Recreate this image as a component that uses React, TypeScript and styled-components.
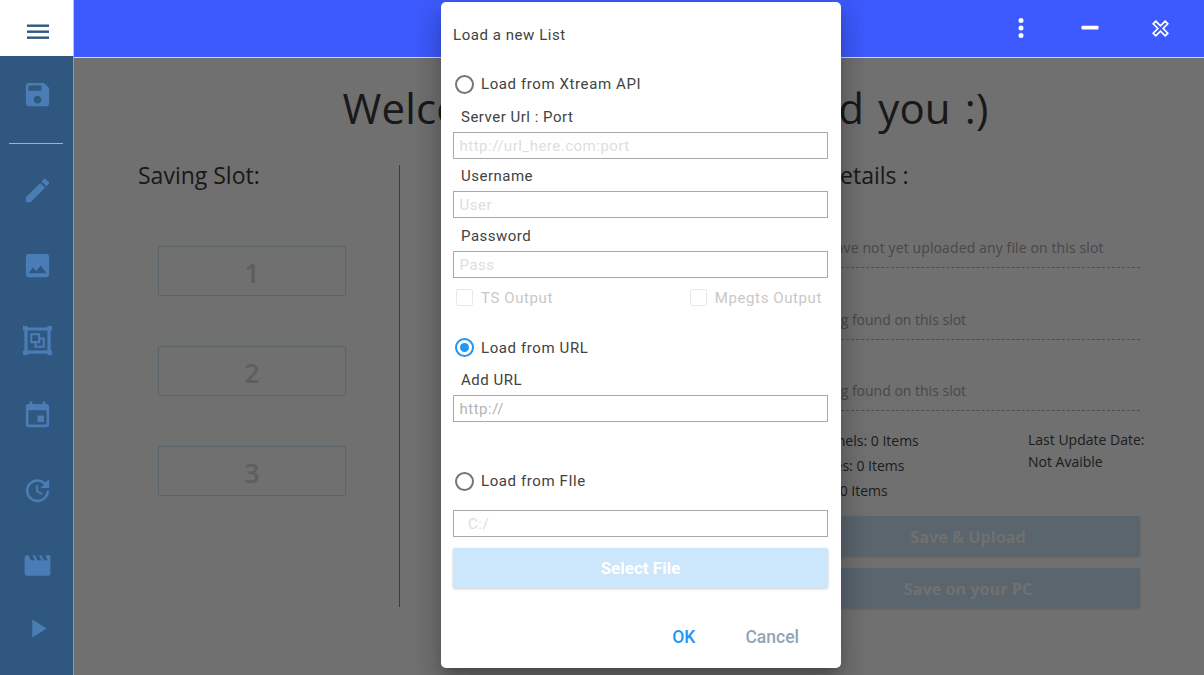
import React from 'react';
import styled, { createGlobalStyle } from 'styled-components';

const GlobalStyle = createGlobalStyle`
  html, body, #root {
    margin: 0;
    height: 100%;
  }

  body {
    overflow: hidden;
    font-family: "Open Sans", "Noto Sans", sans-serif;
    background: #fff;
  }

  * {
    box-sizing: border-box;
  }
`;

const Page = styled.div`
  position: relative;
  display: flex;
  width: 1204px;
  height: 675px;
  overflow: hidden;
`;

const LeftRail = styled.div`
  display: flex;
  flex-direction: column;
  width: 74px;
`;

const MenuCell = styled.div`
  height: 56px;
  display: flex;
  align-items: center;
  justify-content: center;
  padding: 7px 0 0 2px;
  background: #fff;
  border-right: 1px solid #c4c4c4;
  color: #2f5780;
`;

const Sidebar = styled.nav`
  flex: 1;
  padding-top: 1px;
  background: #2f5780;
  border-right: 1px solid #8f9aa5;
`;

const NavItem = styled.div<{ $short?: boolean }>`
  height: ${(p) => (p.$short ? '50px' : '75px')};
  display: flex;
  align-items: center;
  justify-content: center;
  padding-left: 2px;
  color: #4a7db5;
`;

const NavDivider = styled.hr`
  width: 54px;
  height: 1px;
  margin: 11px 0 9px 9px;
  border: 0;
  background: #9fb2c6;
`;

const Content = styled.div`
  flex: 1;
  display: flex;
  flex-direction: column;
`;

const TopBar = styled.header`
  display: flex;
  justify-content: flex-end;
  align-items: center;
  height: 58px;
  padding: 0 9px 1px 0;
  background: #3d5afe;
  border-bottom: 1px solid #ddd;
`;

const TopAction = styled.button`
  width: 70px;
  height: 57px;
  display: flex;
  align-items: center;
  justify-content: center;
  padding: 0;
  border: 0;
  background: none;
  color: #fff;
`;

const Main = styled.main`
  position: relative;
  flex: 1;
  padding-top: 20px;
  background: #fff;
`;

const Welcome = styled.h1`
  margin: 0 0 27px;
  padding-left: 53px;
  font-size: 42px;
  font-weight: 400;
  line-height: 60px;
  letter-spacing: 0.15px;
  word-spacing: 3px;
  text-align: center;
  color: #3a3a3a;
  white-space: nowrap;
`;

const Columns = styled.div`
  display: flex;
  height: 442px;
`;

const SlotColumn = styled.section`
  width: 326px;
  height: 442px;
  padding-left: 64px;
  border-right: 1px solid #888;
`;

const SectionTitle = styled.h2`
  margin: 0;
  font-size: 23px;
  font-weight: 400;
  line-height: 20px;
  color: #3a3a3a;
`;

const SlotList = styled.div`
  display: flex;
  flex-direction: column;
  gap: 50px;
  margin: 61px 0 0 20px;
`;

const SlotButton = styled.div`
  width: 188px;
  height: 50px;
  display: flex;
  align-items: center;
  justify-content: center;
  padding-top: 2px;
  border: 1px solid #cfe2f3;
  border-radius: 2px;
  box-shadow: 0 0 2px rgba(33, 150, 243, 0.2);
  font-size: 27px;
  font-weight: 600;
  color: #dcd2d5;
`;

const DetailsColumn = styled.section`
  width: 344px;
  margin-left: 396px;
`;

const DetailsTitle = styled(SectionTitle)`
  margin-left: -19px;
`;

const SlotRow = styled.div<{ $first?: boolean }>`
  height: 30px;
  margin-top: ${(p) => (p.$first ? '53px' : '41.5px')};
  padding-left: ${(p) => (p.$first ? '2px' : '0')};
  border-bottom: 1px dashed #b0b0b0;
  font-size: 14px;
  line-height: 20px;
  letter-spacing: ${(p) => (p.$first ? '0.12px' : '0')};
  color: #a4a4a4;
  white-space: nowrap;
`;

const Stats = styled.div`
  display: flex;
  justify-content: space-between;
  height: 88px;
  margin-top: 17px;
  font-size: 14px;
  color: #444;
`;

const StatLines = styled.div`
  margin-left: 7px;
  line-height: 25px;
`;

const UpdateLines = styled.div`
  width: 112px;
  padding-top: 1px;
  line-height: 22px;
  white-space: nowrap;
`;

const SaveButton = styled.div`
  height: 40px;
  display: flex;
  align-items: center;
  justify-content: center;
  padding-top: 1px;
  margin-bottom: 12px;
  border-radius: 2px;
  background: #cce6fb;
  box-shadow: 0 1px 3px rgba(0, 0, 0, 0.15);
  font-size: 16.2px;
  font-weight: 700;
  color: #fff;
`;

const Scrim = styled.div`
  position: absolute;
  inset: 0;
  background: rgba(0, 0, 0, 0.56);
`;

const Dialog = styled.div`
  position: absolute;
  top: 2px;
  left: 441px;
  width: 400px;
  height: 666px;
  padding: 0 13px 0 12px;
  border-radius: 5px;
  background: #fff;
  box-shadow: 0 8px 10px -5px rgba(0, 0, 0, 0.2), 0 16px 24px 2px rgba(0, 0, 0, 0.14), 0 6px 30px 5px rgba(0, 0, 0, 0.12);
  font-family: Roboto, sans-serif;
  color: #424242;
`;

const DialogTitle = styled.div`
  height: 72px;
  padding-top: 23px;
  font-size: 15px;
  line-height: 20px;
  letter-spacing: 0.55px;
`;

const RadioRow = styled.label<{ $top?: number }>`
  display: flex;
  align-items: center;
  gap: 7px;
  height: 20px;
  margin: ${(p) => p.$top ?? 0}px 0 0 2px;
  font-size: 15px;
  letter-spacing: 0.6px;
`;

const RadioMark = styled.span<{ $on?: boolean }>`
  position: relative;
  width: 19px;
  height: 19px;
  border: 2px solid ${(p) => (p.$on ? '#2196f3' : '#757575')};
  border-radius: 50%;

  &::after {
    content: '';
    display: ${(p) => (p.$on ? 'block' : 'none')};
    position: absolute;
    inset: 3px;
    border-radius: 50%;
    background: #2196f3;
  }
`;

const FieldLabel = styled.div<{ $lead?: boolean }>`
  height: 20px;
  margin: ${(p) => (p.$lead ? '12.5px' : '7.5px')} 0 5px 8px;
  font-size: 15px;
  line-height: 20px;
  letter-spacing: 0.5px;
`;

const TextField = styled.input<{ $dim?: boolean; $indent?: boolean; $top?: number }>`
  display: block;
  width: 375px;
  height: 27px;
  margin-top: ${(p) => p.$top ?? 0}px;
  padding: 1px ${(p) => (p.$indent ? '14px' : '5.5px')} 0;
  border: 1px solid #a9a9a9;
  border-radius: 0;
  outline: none;
  background: #fff;
  font-family: Roboto, sans-serif;
  font-size: 15px;
  letter-spacing: 0.5px;

  &::placeholder {
    color: ${(p) => (p.$dim ? '#dedede' : '#b4b4b4')};
    opacity: 1;
  }
`;

const OutputRow = styled.div`
  display: flex;
  justify-content: space-between;
  align-items: center;
  height: 20px;
  margin: 10px 6px 0 3px;
`;

const OutputOption = styled.span`
  display: flex;
  align-items: center;
  gap: 8px;
  font-size: 15px;
  letter-spacing: 0.6px;
  color: #c8c8c8;
`;

const CheckMark = styled.span`
  width: 17px;
  height: 17px;
  border: 1px solid #e8e8e8;
  border-radius: 2px;
`;

const SelectButton = styled.div`
  height: 40px;
  display: flex;
  align-items: center;
  justify-content: center;
  margin-top: 11px;
  border-radius: 2px;
  background: #cce6fb;
  box-shadow: 0 1px 3px rgba(0, 0, 0, 0.2);
  font-size: 17px;
  font-weight: 700;
  color: #fff;
`;

const DialogActions = styled.div`
  display: flex;
  justify-content: flex-end;
  align-items: center;
  gap: 50px;
  height: 30px;
  margin-top: 34px;
  padding-right: 29px;
`;

const ActionText = styled.span<{ $muted?: boolean }>`
  font-size: 17.5px;
  font-weight: 500;
  color: ${(p) => (p.$muted ? '#8fa5b5' : '#2196f3')};
`;

const MdIcon: React.FC<{ d: string; size?: number }> = ({ d, size = 31 }) => (
  <svg width={size} height={size} viewBox="0 0 24 24" fill="currentColor">
    <path d={d} />
  </svg>
);

const icons = {
  save: 'M17 3H5c-1.11 0-2 .9-2 2v14c0 1.1.89 2 2 2h14c1.1 0 2-.9 2-2V7l-4-4zm-5 16c-1.66 0-3-1.34-3-3s1.34-3 3-3 3 1.34 3 3-1.34 3-3 3zm3-10H5V5h10v4z',
  edit: 'M3 17.25V21h3.75L17.81 9.94l-3.75-3.75L3 17.25zM20.71 7.04c.39-.39.39-1.02 0-1.41l-2.34-2.34c-.39-.39-1.02-.39-1.41 0l-1.83 1.83 3.75 3.75 1.83-1.83z',
  image: 'M21 19V5c0-1.1-.9-2-2-2H5c-1.1 0-2 .9-2 2v14c0 1.1.9 2 2 2h14c1.1 0 2-.9 2-2zM8.5 13.5l2.5 3.01L14.5 12l4.5 6H5l3.5-4.5z',
  group: 'M2 2h3.2v1h13.6V2H22v3.2h-1v13.6h1V22h-3.2v-1H5.2v1H2v-3.2h1V5.2H2V2zm3.2 3.2v13.6h13.6V5.2H5.2zM7 7h6.8v3h3.2v7h-7v-3.2H7V7zm1.4 1.4v4h4v-4h-4zm5.4 3v2.4h-2.4v1.8h4.2v-4.2h-1.8z',
  event: 'M17 12h-5v5h5v-5zM16 1v2H8V1H6v2H5c-1.11 0-1.99.9-1.99 2L3 19c0 1.1.89 2 2 2h14c1.1 0 2-.9 2-2V5c0-1.1-.9-2-2-2h-1V1h-2zm3 18H5V8h14v11z',
  update: 'M21 10.12h-6.78l2.74-2.82c-2.73-2.7-7.15-2.8-9.88-.1-2.73 2.71-2.73 7.08 0 9.79s7.15 2.71 9.88 0C18.32 15.65 19 14.08 19 12.1h2c0 1.98-.88 4.55-2.64 6.29-3.51 3.48-9.21 3.48-12.72 0-3.5-3.47-3.53-9.11-.02-12.58s9.14-3.47 12.65 0L21 3v7.12zM12.5 8v4.25l3.5 2.08-.72 1.21L11 13V8h1.5z',
  movie: 'M18 4l2 4h-3l-2-4h-2l2 4h-3l-2-4H8l2 4H7L5 4H4c-1.1 0-1.99.9-1.99 2L2 18c0 1.1.9 2 2 2h16c1.1 0 2-.9 2-2V4h-4z',
  play: 'M8 5v14l11-7z',
};

const App: React.FC = () => (
  <Page>
    <GlobalStyle />
    <LeftRail>
      <MenuCell>
        <svg width="24" height="16" viewBox="0 0 24 16" fill="currentColor">
          <rect x="1" y="0.5" width="22" height="2.4" />
          <rect x="1" y="6.5" width="22" height="2.4" />
          <rect x="1" y="12.5" width="22" height="2.4" />
        </svg>
      </MenuCell>
      <Sidebar>
        <NavItem><MdIcon d={icons.save} /></NavItem>
        <NavDivider />
        <NavItem><MdIcon d={icons.edit} /></NavItem>
        <NavItem><MdIcon d={icons.image} /></NavItem>
        <NavItem><MdIcon d={icons.group} size={35} /></NavItem>
        <NavItem><MdIcon d={icons.event} /></NavItem>
        <NavItem><MdIcon d={icons.update} /></NavItem>
        <NavItem><MdIcon d={icons.movie} /></NavItem>
        <NavItem $short><MdIcon d={icons.play} /></NavItem>
      </Sidebar>
    </LeftRail>

    <Content>
      <TopBar>
        <TopAction>
          <svg width="10" height="22" viewBox="0 0 10 22" fill="currentColor">
            <circle cx="6" cy="3.5" r="2.5" />
            <circle cx="6" cy="11" r="2.5" />
            <circle cx="6" cy="18.5" r="2.5" />
          </svg>
        </TopAction>
        <TopAction>
          <svg width="18" height="6" viewBox="0 0 18 6" fill="currentColor">
            <rect x="0.5" y="0.8" width="17" height="3.6" rx="0.8" />
          </svg>
        </TopAction>
        <TopAction>
          <svg width="17" height="17" viewBox="0 0 18 18" fill="none" stroke="currentColor" strokeWidth="1.8">
            <path d="M4 1.2L9 6.2L14 1.2L16.8 4L11.8 9L16.8 14L14 16.8L9 11.8L4 16.8L1.2 14L6.2 9L1.2 4Z" />
          </svg>
        </TopAction>
      </TopBar>

      <Main>
        <Welcome>Welcome, I'm glad I found you :)</Welcome>
        <Columns>
          <SlotColumn>
            <SectionTitle>Saving Slot:</SectionTitle>
            <SlotList>
              <SlotButton>1</SlotButton>
              <SlotButton>2</SlotButton>
              <SlotButton>3</SlotButton>
            </SlotList>
          </SlotColumn>
          <DetailsColumn>
            <DetailsTitle>Slot Details :</DetailsTitle>
            <SlotRow $first>You have not yet uploaded any file on this slot</SlotRow>
            <SlotRow>Nothing found on this slot</SlotRow>
            <SlotRow>Nothing found on this slot</SlotRow>
            <Stats>
              <StatLines>
                <div>Channels: 0 Items</div>
                <div>Movies: 0 Items</div>
                <div>VOD: 0 Items</div>
              </StatLines>
              <UpdateLines>
                <div>Last Update Date:</div>
                <div>Not Avaible</div>
              </UpdateLines>
            </Stats>
            <SaveButton>Save &amp; Upload</SaveButton>
            <SaveButton>Save on your PC</SaveButton>
          </DetailsColumn>
        </Columns>
        <Scrim />
      </Main>
    </Content>

    <Dialog>
      <DialogTitle>Load a new List</DialogTitle>
      <RadioRow><RadioMark />Load from Xtream API</RadioRow>
      <FieldLabel $lead>Server Url : Port</FieldLabel>
      <TextField $dim placeholder="http://url_here.com:port" />
      <FieldLabel>Username</FieldLabel>
      <TextField $dim placeholder="User" />
      <FieldLabel>Password</FieldLabel>
      <TextField $dim placeholder="Pass" />
      <OutputRow>
        <OutputOption><CheckMark />TS Output</OutputOption>
        <OutputOption><CheckMark />Mpegts Output</OutputOption>
      </OutputRow>
      <RadioRow $top={30}><RadioMark $on />Load from URL</RadioRow>
      <FieldLabel $lead>Add URL</FieldLabel>
      <TextField placeholder="http://" />
      <RadioRow $top={49}><RadioMark />Load from FIle</RadioRow>
      <TextField $dim $indent $top={19} placeholder="C:/" />
      <SelectButton>Select File</SelectButton>
      <DialogActions>
        <ActionText>OK</ActionText>
        <ActionText $muted>Cancel</ActionText>
      </DialogActions>
    </Dialog>
  </Page>
);

export default App;
